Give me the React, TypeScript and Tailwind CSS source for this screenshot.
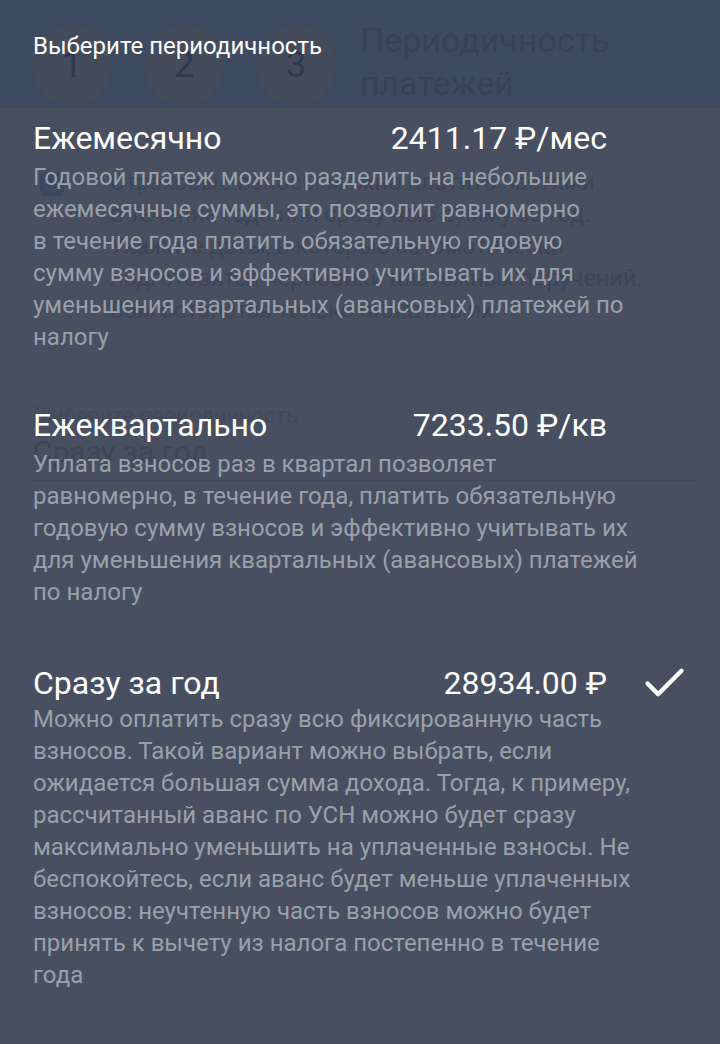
import React from 'react';
import { Check, Info } from 'lucide-react';

type Option = {
  id: string;
  title: string;
  price: string;
  description: string;
};

const options: Option[] = [
  {
    id: 'month',
    title: 'Ежемесячно',
    price: '2411.17 ₽/мес',
    description:
      'Годовой платеж можно разделить на небольшие ежемесячные суммы, это позволит равномерно в\u00a0течение года платить обязательную годовую сумму\u00a0взносов и эффективно учитывать их для уменьшения квартальных (авансовых) платежей по налогу',
  },
  {
    id: 'quarter',
    title: 'Ежеквартально',
    price: '7233.50 ₽/кв',
    description:
      'Уплата взносов раз в квартал позволяет равномерно, в течение года, платить обязательную годовую сумму взносов и эффективно учитывать их для уменьшения квартальных (авансовых) платежей по налогу',
  },
  {
    id: 'year',
    title: 'Сразу за год',
    price: '28934.00 ₽',
    description:
      'Можно оплатить сразу всю фиксированную часть взносов. Такой вариант можно выбрать, если ожидается большая сумма дохода. Тогда, к примеру, рассчитанный аванс по УСН можно будет сразу максимально уменьшить на уплаченные взносы. Не беспокойтесь, если аванс будет меньше уплаченных взносов: неучтенную часть взносов можно будет принять к вычету из налога постепенно в течение года',
  },
];

// page under the dialog
function BackgroundPage() {
  return (
    <div className="min-h-[1044px] bg-white">
      <div className="flex h-[108px] items-start bg-[#b4d4ff] pl-8 pt-[25px]">
        <div className="flex gap-8">
          {[1, 2, 3].map((n) => (
            <div
              key={n}
              className="flex h-20 w-20 items-center justify-center rounded-full bg-[#e6d8c8] text-[36px] text-[#34448a]"
            >
              {n}
            </div>
          ))}
        </div>
        <div className="ml-6 -mt-[6px] text-[34px] leading-[43px] text-[#8c8ca4]">
          Периодичность
          <br />
          платежей
        </div>
      </div>

      <div className="flex gap-[46px] pl-[40px] pt-[58px] pr-2">
        <div className="mt-[6px] flex h-[24px] w-[24px] items-center justify-center rounded-md bg-[#9ab8f0]">
          <Info className="h-4 w-4 text-white" />
        </div>
        <p className="text-[23.5px] leading-[32px] text-[#b4b4b4]">
          Страховые взносы можно платить частями
          <br />
          в течение года или сразу всю сумму за год.
          <br />
          Укажите даты, в которые автоматически
          <br />
          подготовятся черновики платежных поручений.
          <br />
          Вам останется только оплатить их
        </p>
      </div>

      <div className="mt-[76px] pl-[33px] pr-5">
        <div className="text-[22px] leading-[28px] text-[#c8c8c8]">Выберите периодичность</div>
        <div className="mt-[4px] text-[30px] leading-[36px] text-[#b4b4b4]">Сразу за год</div>
        <div className="mt-[10px] h-px bg-[#c8c8c8]" />
      </div>
    </div>
  );
}

export default function App() {
  const selected = 'year';

  return (
    <div className="relative h-[1044px] w-[720px] overflow-hidden font-['Roboto',sans-serif]">
      <BackgroundPage />

      <div className="absolute inset-0 bg-[#2e374a]/[0.88]">
        <div className="pl-[33px] pt-[31px] text-[24px] leading-[30px] text-white">Выберите периодичность</div>

        <div className="mt-[57px] flex flex-col gap-[52px]">
          {options.map((opt, i) => (
            <div key={opt.id} className={`flex flex-col ${i === 2 ? 'mt-[3px]' : ''}`}>
              <div className="flex h-[40px] items-center pl-[33px]">
                <span className="flex-1 text-[32px] leading-[40px] text-white">{opt.title}</span>
                <span className="text-[32px] leading-[40px] text-white">{opt.price}</span>
                <span className="ml-[32px] mr-[30px] flex h-[51px] w-[51px] items-center justify-center">
                  {selected === opt.id && <Check className="h-[51px] w-[51px] text-white" strokeWidth={2} />}
                </span>
              </div>
              <p
                className={`pl-[33px] pr-[80px] text-[24px] leading-[32px] text-[#9aa0aa] ${i === 2 ? 'mt-0' : 'mt-[3px]'}`}
              >
                {opt.description}
              </p>
            </div>
          ))}
        </div>
      </div>
    </div>
  );
}
